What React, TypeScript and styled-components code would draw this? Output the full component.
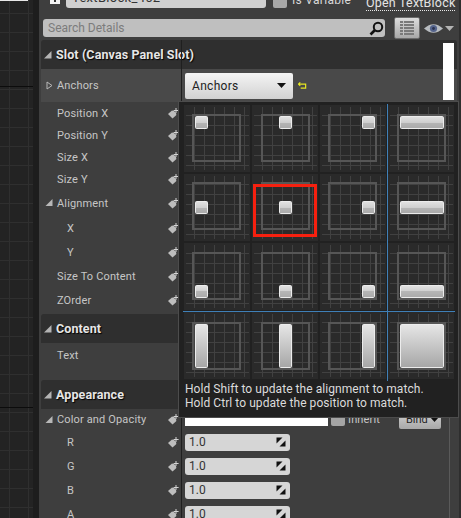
import React, { useId } from "react";
import styled, { createGlobalStyle } from "styled-components";

const Global = createGlobalStyle`
  html, body { margin: 0; padding: 0; background: #3e3e3e; }
  * { box-sizing: border-box; }
`;

const Frame = styled.div`
  display: flex;
  width: 461px;
  height: 518px;
  overflow: hidden;
  font-family: Roboto, "Liberation Sans", sans-serif;
`;

const Canvas = styled.div`
  position: relative;
  width: 33px;
  flex: none;
  background-color: #232323;
  background-image:
    linear-gradient(to bottom, transparent 86px, #0c0c0c 86px, #0c0c0c 87px, transparent 87px, transparent 407px, #0c0c0c 407px, #0c0c0c 408px, transparent 408px),
    linear-gradient(to right, #2f2f2f 1px, transparent 1px),
    linear-gradient(to bottom, #2f2f2f 1px, transparent 1px);
  background-size: 100% 100%, 19px 19px, 19px 19px;
  background-position: 0 0, 9px 0, 0 13px;
`;

const CanvasEdge = styled.div`
  position: absolute;
  left: 0;
  top: 0;
  width: 28px;
  height: 1px;
  background: #e8e8e8;
`;

const Gutter = styled.div`
  width: 6px;
  flex: none;
  background: #1d1d1d;
`;

const Main = styled.div`
  position: relative;
  width: 420px;
  flex: none;
  background: #3e3e3e;
  display: flex;
  flex-direction: column;
`;

const RightEdge = styled.div`
  width: 2px;
  flex: none;
  background: #2e2e2e;
`;

const TopBar = styled.div`
  height: 12px;
  flex: none;
  overflow: hidden;
  display: flex;
  align-items: flex-end;
  padding: 0 0 4px 11px;
  color: #d8d8d8;
  font-size: 12px;
`;

const LockIcon = styled.svg`
  width: 10px;
  height: 8px;
  flex: none;
  margin: 0 6px 4px 0;
`;

const NameField = styled.div`
  width: 200px;
  height: 20px;
  flex: none;
  background: #d0d0d0;
  border-radius: 3px;
  color: #333;
  padding-left: 6px;
  font-size: 13px;
  line-height: 19px;
  letter-spacing: 0.3px;
`;

const VarCheck = styled.div`
  width: 14px;
  height: 14px;
  flex: none;
  background: #a8a8a8;
  border-radius: 2px;
  margin-left: 7px;
`;

const VarLabel = styled.span`
  width: 74px;
  flex: none;
  margin-left: 5px;
  line-height: 13px;
  height: 14px;
  white-space: nowrap;
  letter-spacing: 0.3px;
`;

const OpenLink = styled.span`
  flex: none;
  color: #e4e4e4;
  white-space: nowrap;
  line-height: 13px;
  height: 15px;
  border-bottom: 1px dotted #e8e8e8;
  margin-bottom: -3px;
  font-size: 12.5px;
  letter-spacing: 0.2px;
`;

const SearchRow = styled.div`
  display: flex;
  align-items: center;
  height: 22px;
  flex: none;
  margin-top: 5px;
  padding-left: 4px;
`;

const SearchBox = styled.div`
  width: 342px;
  height: 18px;
  flex: none;
  background: #bfbfbf;
  border-radius: 3px;
  color: #7c7c7c;
  font-size: 12px;
  letter-spacing: 0;
  line-height: 18px;
  padding: 0 1px 0 5px;
  display: flex;
  align-items: center;
  justify-content: space-between;
`;

const ViewButton = styled.div`
  width: 26px;
  height: 22px;
  flex: none;
  margin-left: 9px;
  border-radius: 2px;
  border: 1px solid #6c6c6c;
  background: linear-gradient(to bottom, #dcdcdc, #a8a8a8);
  display: flex;
  align-items: center;
  justify-content: center;
`;

const EyeWrap = styled.div`
  display: flex;
  align-items: center;
  gap: 2px;
  margin-left: 4px;
`;

const Panel = styled.div`
  position: relative;
  width: 416px;
  margin: 1px 0 0 2px;
  display: flex;
  flex-direction: column;
  flex: 1;
  min-height: 0;
  &::after {
    content: "";
    position: absolute;
    left: 140px;
    top: 0;
    bottom: 0;
    width: 1px;
    background: #1f1f1f;
  }
  &::before {
    content: "";
    position: absolute;
    left: 408px;
    top: 369px;
    bottom: 0;
    width: 1px;
    background: #5a5a5a;
  }
`;

const Section = styled.div<{ $gap?: number }>`
  height: 29px;
  flex: none;
  background: #2f2f2f;
  border-radius: 3px 3px 0 0;
  display: flex;
  align-items: center;
  gap: 4px;
  padding-left: 3px;
  margin-top: ${(p) => p.$gap ?? 0}px;
  color: #e6e6e6;
  font-size: 12.5px;
  font-weight: 700;
  letter-spacing: 0.1px;
  text-shadow: 1px 1px 1px #000;
`;

const Scroll = styled.div`
  position: absolute;
  left: 402px;
  top: 3px;
  width: 11px;
  height: 57px;
  background: #fff;
  z-index: 1;
`;

const Row = styled.div<{ $h: number; $tone?: boolean }>`
  height: ${(p) => p.$h}px;
  flex: none;
  display: flex;
  align-items: center;
  background: ${(p) => (p.$tone ? "#494949" : "transparent")};
`;

const NameCell = styled.div<{ $indent: number }>`
  width: 140px;
  flex: none;
  display: flex;
  align-items: center;
  height: 100%;
  padding-left: ${(p) => p.$indent}px;
  padding-right: 2px;
  color: #c6c6c6;
  font-size: 11px;
  letter-spacing: 0.15px;
  white-space: nowrap;
  position: relative;
`;

const Label = styled.span`
  flex: 1;
`;

const Expander = styled.svg`
  position: absolute;
  left: 4px;
  top: 50%;
  margin-top: -5px;
  width: 9px;
  height: 9px;
`;

const ValueCell = styled.div`
  display: flex;
  align-items: center;
  padding-left: 4px;
  flex: 1;
  height: 100%;
`;

const Dropdown = styled.div`
  width: 108px;
  height: 26px;
  background: linear-gradient(to bottom, #f4f4f4, #d2d2d2);
  border-radius: 2px;
  display: flex;
  align-items: center;
  justify-content: space-between;
  padding: 0 7px;
  color: #222;
  font-size: 12px;
  letter-spacing: 0.3px;
`;

const ResetIcon = styled.svg`
  width: 9px;
  height: 9px;
  margin-left: 5px;
`;

const ColorBar = styled.div`
  width: 143px;
  height: 17px;
  background: #fff;
  margin-top: -4px;
`;

const InheritCheck = styled.div`
  width: 14px;
  height: 16px;
  margin-left: 3px;
  margin-top: -3px;
  border-radius: 2px;
  background: #a4a4a4;
`;

const InheritLabel = styled.span`
  margin-left: 3px;
  width: 51px;
  color: #c6c6c6;
  font-size: 11px;
  letter-spacing: 0.15px;
`;

const BindButton = styled.div`
  width: 42px;
  height: 20px;
  margin-top: -1px;
  border-radius: 2px;
  background: linear-gradient(to bottom, #d8d8d8, #a8a8a8);
  color: #222;
  font-size: 11px;
  display: flex;
  align-items: center;
  padding-left: 7px;
  gap: 2px;
`;

const NumField = styled.div`
  width: 105px;
  height: 17px;
  background: #d6d6d6;
  border-radius: 3px;
  color: #333;
  font-size: 12px;
  line-height: 17px;
  padding: 0 4px 0 4px;
  display: flex;
  align-items: center;
  justify-content: space-between;
`;

const Popup = styled.div`
  position: absolute;
  left: 139px;
  top: 101px;
  width: 281px;
  height: 317px;
  z-index: 2;
  background: #212121;
  border: 1px solid #4c4c4c;
  padding: 3px 0 0 5px;
`;

const AnchorGrid = styled.div`
  display: grid;
  grid-template-columns: repeat(4, 66px);
  grid-auto-rows: 67px;
  gap: 2px;
`;

const Cell = styled.div`
  position: relative;
  height: 67px;
  background: #2a2a2a;
`;

const CellArt = styled.svg`
  display: block;
  width: 66px;
  height: 67px;
`;

const Highlight = styled.div`
  position: absolute;
  left: 1px;
  top: 10px;
  width: 64px;
  height: 53px;
  border: 3px solid #f5200f;
`;

const BlueV = styled.div`
  position: absolute;
  left: 208px;
  top: 2px;
  width: 1px;
  height: 277px;
  background: #3f80b8;
`;

const BlueH = styled.div`
  position: absolute;
  left: 4px;
  top: 209px;
  width: 272px;
  height: 1px;
  background: #3f80b8;
`;

const Hint = styled.div`
  margin: 3px 0 0 1px;
  color: #dcdcdc;
  font-size: 12px;
  line-height: 14px;
  letter-spacing: 0.06px;
  white-space: nowrap;
`;

const KeyIcon = () => (
  <svg width="11" height="11" viewBox="0 0 11 11" style={{ flex: "none" }}>
    <path d="M0 6 L4 2.5 L6 3 L8 5 L8.4 7 L4.5 10.5 Z" fill="#bdbdbd" />
    <path d="M8 0 V5 M5.6 2.5 H10.6" stroke="#d4d4d4" strokeWidth="1" fill="none" />
  </svg>
);

const OpenArrow = () => (
  <Expander viewBox="0 0 9 9">
    <path d="M0.5 8 L7.5 8 L7.5 1 Z" fill="#b8b8b8" />
  </Expander>
);

const ClosedArrow = () => (
  <Expander viewBox="0 0 9 9">
    <path d="M2 1 L7 4.5 L2 8 Z" fill="none" stroke="#b8b8b8" strokeWidth="1" />
  </Expander>
);

const SectionArrow = () => (
  <svg width="8" height="8" viewBox="0 0 8 8" style={{ flex: "none" }}>
    <path d="M0 7.5 L7.5 7.5 L7.5 0 Z" fill="#b4b4b4" />
  </svg>
);

const SpinIcon = () => (
  <svg width="10" height="10" viewBox="0 0 10 10">
    <path d="M0.5 0.5 H6.5 L0.5 6.5 Z" fill="#111" />
    <path d="M9.5 3.5 V9.5 H3.5 Z" fill="#111" />
  </svg>
);

const Caret = ({ c = "#111" }: { c?: string }) => (
  <svg width="9" height="5" viewBox="0 0 9 5">
    <path d="M0 0 H9 L4.5 5 Z" fill={c} />
  </svg>
);

type AnchorProps = { col: number; row: number };

const blockX = [[11, 13], [27, 13], [42, 13], [12, 44]];
const blockY = [[11, 13], [27, 13], [42, 13], [12, 44]];
const frameX = [9, 10, 9, 10];
const frameY = [10, 9, 10, 11];

const AnchorArt = ({ col, row }: AnchorProps) => {
  const id = useId();
  const [x, w] = blockX[col];
  const [y, h] = blockY[row];
  const lines = [10, 20, 30, 40, 50, 60];
  return (
    <CellArt viewBox="0 0 66 67">
      <defs>
        <linearGradient id={id} x1="0" y1="0" x2="0" y2="1">
          {row === 3 ? (
            <>
              <stop offset="0" stopColor="#e6e6e6" />
              <stop offset="1" stopColor="#a6a6a6" />
            </>
          ) : (
            <>
              <stop offset="0" stopColor="#e2e2e2" />
              <stop offset="0.5" stopColor="#cfcfcf" />
              <stop offset="0.5" stopColor="#b6b6b6" />
              <stop offset="1" stopColor="#aaaaaa" />
            </>
          )}
        </linearGradient>
      </defs>
      {lines.map((v) => (
        <path key={"v" + v} d={`M${v + 0.5} 2 V65`} stroke="#414141" strokeWidth="1" />
      ))}
      {lines.map((v) => (
        <path key={"h" + v} d={`M2 ${v + 0.5} H65`} stroke="#414141" strokeWidth="1" />
      ))}
      <rect x={frameX[col]} y={frameY[row]} width="47" height="46" fill="none" stroke="#565656" strokeWidth="2" />
      <rect x={x + 0.5} y={y + 0.5} width={w - 1} height={h - 1} rx="1" fill={`url(#${id})`} stroke="#ececec" strokeWidth="1" />
    </CellArt>
  );
};

const props: [string, number][] = [
  ["Position X", 22],
  ["Position Y", 22],
  ["Size X", 22],
  ["Size Y", 22],
];

export default function App() {
  const cells: AnchorProps[] = [];
  for (let row = 0; row < 4; row++) for (let col = 0; col < 4; col++) cells.push({ col, row });

  return (
    <>
      <Global />
      <Frame>
        <Canvas>
          <CanvasEdge />
        </Canvas>
        <Gutter />
        <Main>
          <TopBar>
            <LockIcon viewBox="0 0 10 8">
              <path d="M0 0 H10 V8 H0 Z" fill="#f2f2f2" />
              <path d="M4 3 H6 V6 H4 Z" fill="#333" />
            </LockIcon>
            <NameField>TextBlock_462</NameField>
            <VarCheck />
            <VarLabel>Is Variable</VarLabel>
            <OpenLink>Open TextBlock</OpenLink>
          </TopBar>

          <SearchRow>
            <SearchBox>
              <span>Search Details</span>
              <svg width="15" height="15" viewBox="0 0 15 15">
                <circle cx="9" cy="6" r="4.2" fill="none" stroke="#111" strokeWidth="2" />
                <path d="M6 9 L1.5 13.5" stroke="#111" strokeWidth="2.6" />
              </svg>
            </SearchBox>
            <ViewButton>
              <svg width="14" height="14" viewBox="0 0 14 14">
                <path d="M0 1 H14 M0 4 H14 M0 7 H14 M0 10 H14 M0 13 H14" stroke="#7a7a7a" strokeWidth="2" />
                <path d="M3.5 0 V14" stroke="#c4c4c4" strokeWidth="1" />
              </svg>
            </ViewButton>
            <EyeWrap>
              <svg width="19" height="11" viewBox="0 0 19 11">
                <path d="M0 5.5 Q9.5 -3 19 5.5 Q9.5 14 0 5.5 Z" fill="#b8bcc0" />
                <circle cx="9.5" cy="5.5" r="3.6" fill="#55648c" />
                <circle cx="9.5" cy="5.5" r="1.4" fill="#2b3350" />
              </svg>
              <Caret c="#b4b4b4" />
            </EyeWrap>
          </SearchRow>

          <Panel>
            <Scroll />
            <Section>
              <SectionArrow />
              Slot (Canvas Panel Slot)
            </Section>
            <Row $h={33} $tone>
              <NameCell $indent={16}>
                <ClosedArrow />
                <Label>Anchors</Label>
              </NameCell>
              <ValueCell>
                <Dropdown>
                  Anchors
                  <Caret />
                </Dropdown>
                <ResetIcon viewBox="0 0 10 9">
                  <path d="M2.5 1 L0.5 3 L2.5 5 M1 3 H8.5 V7.5 H3" fill="none" stroke="#e8e820" strokeWidth="1.3" />
                </ResetIcon>
              </ValueCell>
            </Row>
            {props.map(([name, h]) => (
              <Row key={name} $h={h}>
                <NameCell $indent={16}>
                  <Label>{name}</Label>
                  <KeyIcon />
                </NameCell>
              </Row>
            ))}
            <Row $h={26}>
              <NameCell $indent={16}>
                <OpenArrow />
                <Label>Alignment</Label>
                <KeyIcon />
              </NameCell>
            </Row>
            <Row $h={24}>
              <NameCell $indent={26}>
                <Label>X</Label>
                <KeyIcon />
              </NameCell>
            </Row>
            <Row $h={24}>
              <NameCell $indent={26}>
                <Label>Y</Label>
                <KeyIcon />
              </NameCell>
            </Row>
            <Row $h={24}>
              <NameCell $indent={16}>
                <Label>Size To Content</Label>
                <KeyIcon />
              </NameCell>
            </Row>
            <Row $h={24}>
              <NameCell $indent={16}>
                <Label>ZOrder</Label>
                <KeyIcon />
              </NameCell>
            </Row>
            <Section $gap={2}>
              <SectionArrow />
              Content
            </Section>
            <Row $h={24}>
              <NameCell $indent={16}>
                <Label>Text</Label>
              </NameCell>
            </Row>
            <Section $gap={13}>
              <SectionArrow />
              Appearance
            </Section>
            <Row $h={21}>
              <NameCell $indent={16}>
                <OpenArrow />
                <Label>Color and Opacity</Label>
                <KeyIcon />
              </NameCell>
              <ValueCell>
                <ColorBar />
                <InheritCheck />
                <InheritLabel>Inherit</InheritLabel>
                <BindButton>
                  Bind
                  <Caret />
                </BindButton>
              </ValueCell>
            </Row>
            {["R", "G", "B", "A"].map((c) => (
              <Row key={c} $h={24}>
                <NameCell $indent={26}>
                  <Label>{c}</Label>
                  <KeyIcon />
                </NameCell>
                <ValueCell>
                  <NumField>
                    1.0
                    <SpinIcon />
                  </NumField>
                </ValueCell>
              </Row>
            ))}
          </Panel>

          <Popup>
            <AnchorGrid>
              {cells.map((c) => (
                <Cell key={`${c.col}-${c.row}`}>
                  <AnchorArt col={c.col} row={c.row} />
                  {c.col === 1 && c.row === 1 && <Highlight />}
                </Cell>
              ))}
            </AnchorGrid>
            <BlueV />
            <BlueH />
            <Hint>
              Hold Shift to update the alignment to match.
              <br />
              Hold Ctrl to update the position to match.
            </Hint>
          </Popup>
        </Main>
        <RightEdge />
      </Frame>
    </>
  );
}
